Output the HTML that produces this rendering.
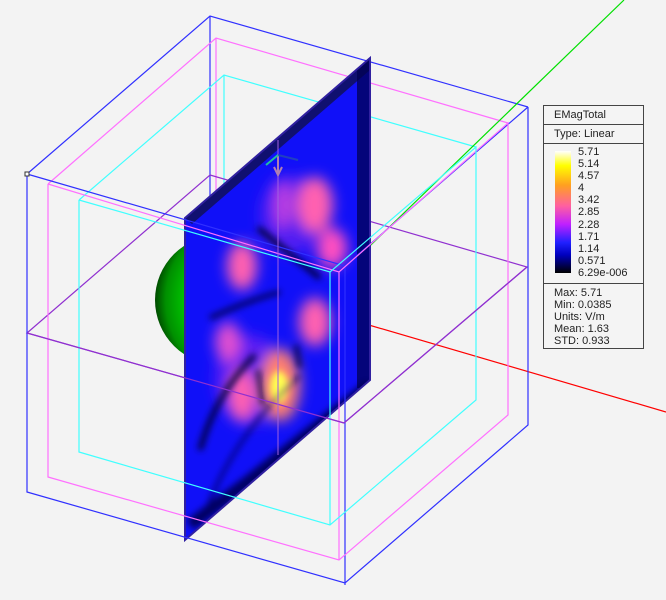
<!DOCTYPE html>
<html><head><style>
body{margin:0;background:#f3f3f3;width:666px;height:600px;overflow:hidden;position:relative;font-family:"Liberation Sans",sans-serif}
svg{position:absolute;left:0;top:0}
.lg{position:absolute;left:543px;top:105px;width:99px;height:242px;border:1px solid #444;background:#f4f4f4;font-size:11px;color:#222}
.row{height:18px;border-bottom:1px solid #444;padding-left:10px;line-height:18px}
.bar{position:absolute;left:11px;top:45px;width:16px;height:122px;background:linear-gradient(#fff,#ff0 12%,#ffa020 28%,#ff60a0 45%,#c020ff 60%,#2020ff 75%,#0000c0 85%,#000 100%)}
.lab{position:absolute;left:34px;top:40px;line-height:12.1px}
.st{position:absolute;top:177px;width:89px;border-top:1px solid #444;left:0;padding-left:10px;padding-top:3px;line-height:12px}
</style></head><body>
<svg width="666" height="600" viewBox="0 0 666 600">
<defs>
<clipPath id="pc"><polygon points="185,218 370,58 370,380 185,540"/></clipPath>
<filter id="b6" x="-50%" y="-50%" width="200%" height="200%"><feGaussianBlur stdDeviation="7"/></filter>
<filter id="b3" x="-50%" y="-50%" width="200%" height="200%"><feGaussianBlur stdDeviation="3.5"/></filter>
<radialGradient id="sg" cx="0.72" cy="0.5" r="0.75"><stop offset="0" stop-color="#00e000"/><stop offset="0.6" stop-color="#00d000"/><stop offset="0.85" stop-color="#009000"/><stop offset="1" stop-color="#003000"/></radialGradient>
</defs>
<g fill="none" stroke-width="1.2">
<polyline points="27,174 210,16 528,107" stroke="#3030ff"/>
<line x1="210" y1="16" x2="210" y2="220" stroke="#3030ff"/>
<polyline points="48,184 216,38 508,123" stroke="#ff70ff"/>
<line x1="216" y1="38" x2="216" y2="220" stroke="#ff70ff"/>
<polyline points="79,200 224,75 476,147" stroke="#40ffff"/>
<line x1="224" y1="75" x2="224" y2="220" stroke="#40ffff"/>
<line x1="345" y1="270" x2="624" y2="0" stroke="#00e000"/>
<line x1="345" y1="318" x2="666" y2="412" stroke="#ff0000"/>
<polygon points="210,175 527,267 344,423 27,333" stroke="#9030d0"/>
</g>
<circle cx="220" cy="300" r="65" fill="url(#sg)"/>
<g clip-path="url(#pc)">
<rect x="180" y="50" width="200" height="500" fill="#1010f8"/>
<g filter="url(#b6)">
<ellipse cx="290" cy="215" rx="30" ry="40" fill="#6020f0" opacity="0.8"/>
<ellipse cx="250" cy="380" rx="35" ry="45" fill="#7020f0" opacity="0.8"/>
<ellipse cx="315" cy="205" rx="18" ry="28" fill="#ff60b0"/>
<ellipse cx="283" cy="205" rx="9" ry="24" fill="#c040e0"/>
<ellipse cx="242" cy="266" rx="15" ry="24" fill="#ff60b0"/>
<ellipse cx="332" cy="248" rx="15" ry="20" fill="#ff50c0"/>
<ellipse cx="315" cy="322" rx="16" ry="24" fill="#ff60b0"/>
<ellipse cx="228" cy="342" rx="13" ry="20" fill="#e050d0"/>
<ellipse cx="242" cy="395" rx="13" ry="26" fill="#ff60b0"/>
<ellipse cx="280" cy="385" rx="20" ry="36" fill="#ff8070"/>
</g>
<g filter="url(#b3)">
<ellipse cx="279" cy="387" rx="9" ry="16" fill="#ffff50"/>
<path d="M258 228 Q285 250 320 278" stroke="#000030" stroke-width="5" fill="none"/>
<path d="M210 318 Q250 300 280 292" stroke="#000040" stroke-width="4" fill="none"/>
<path d="M200 450 Q215 395 255 355" stroke="#000030" stroke-width="5" fill="none"/>
<path d="M205 515 Q230 440 300 375" stroke="#000060" stroke-width="3" fill="none"/>
<path d="M258 370 L263 405" stroke="#000030" stroke-width="4" fill="none"/>
<path d="M296 345 L300 368" stroke="#000030" stroke-width="4" fill="none"/>
<path d="M190 525 L250 480 L370 385" stroke="#000060" stroke-width="12" fill="none"/>
</g>
<polygon points="185,218 370,58 370,70 192,224" fill="#101070"/>
<rect x="357" y="58" width="13" height="330" fill="#000050" opacity="0.75"/>
</g>
<polygon points="185,218 370,58 370,380 185,540" fill="none" stroke="#3020a0" stroke-width="2"/>
<g fill="none" stroke-width="1.2">
<polyline points="27,174 345,266 528,107" stroke="#3030ff"/>
<polyline points="27,174 27,492 345,583 528,425 528,107" stroke="#3030ff"/>
<line x1="345" y1="266" x2="345" y2="585" stroke="#3030ff"/>
<polyline points="48,184 339,272 508,123 508,415 339,560 48,477 48,184" stroke="#ff70ff"/>
<line x1="339" y1="272" x2="339" y2="560" stroke="#ff70ff"/>
<polyline points="79,200 330,272 476,147 476,400 330,525 79,452 79,200" stroke="#40ffff"/>
<line x1="330" y1="272" x2="330" y2="525" stroke="#40ffff"/>
<line x1="27" y1="333" x2="344" y2="423" stroke="#9030d0"/>
<line x1="344" y1="423" x2="527" y2="267" stroke="#9030d0"/>
<line x1="278" y1="140" x2="278" y2="455" stroke="#a060e0" stroke-width="1"/>
</g>
<rect x="25" y="172" width="4" height="4" fill="#fff" stroke="#333" stroke-width="1"/>
<path d="M278 155 L278 172 M274 167 L278 175 L282 167" stroke="#b080b0" stroke-width="2" fill="none"/>
<path d="M278 155 L298 160" stroke="#2040c0" stroke-width="2"/>
<path d="M278 155 L266 165" stroke="#20c0a0" stroke-width="2"/>
</svg>
<div class="lg">
<div class="row">EMagTotal</div>
<div class="row">Type: Linear</div>
<div class="bar"></div>
<div class="lab">5.71<br>5.14<br>4.57<br>4<br>3.42<br>2.85<br>2.28<br>1.71<br>1.14<br>0.571<br>6.29e-006</div>
<div class="st">Max: 5.71<br>Min: 0.0385<br>Units: V/m<br>Mean: 1.63<br>STD: 0.933</div>
</div>
</body></html>
